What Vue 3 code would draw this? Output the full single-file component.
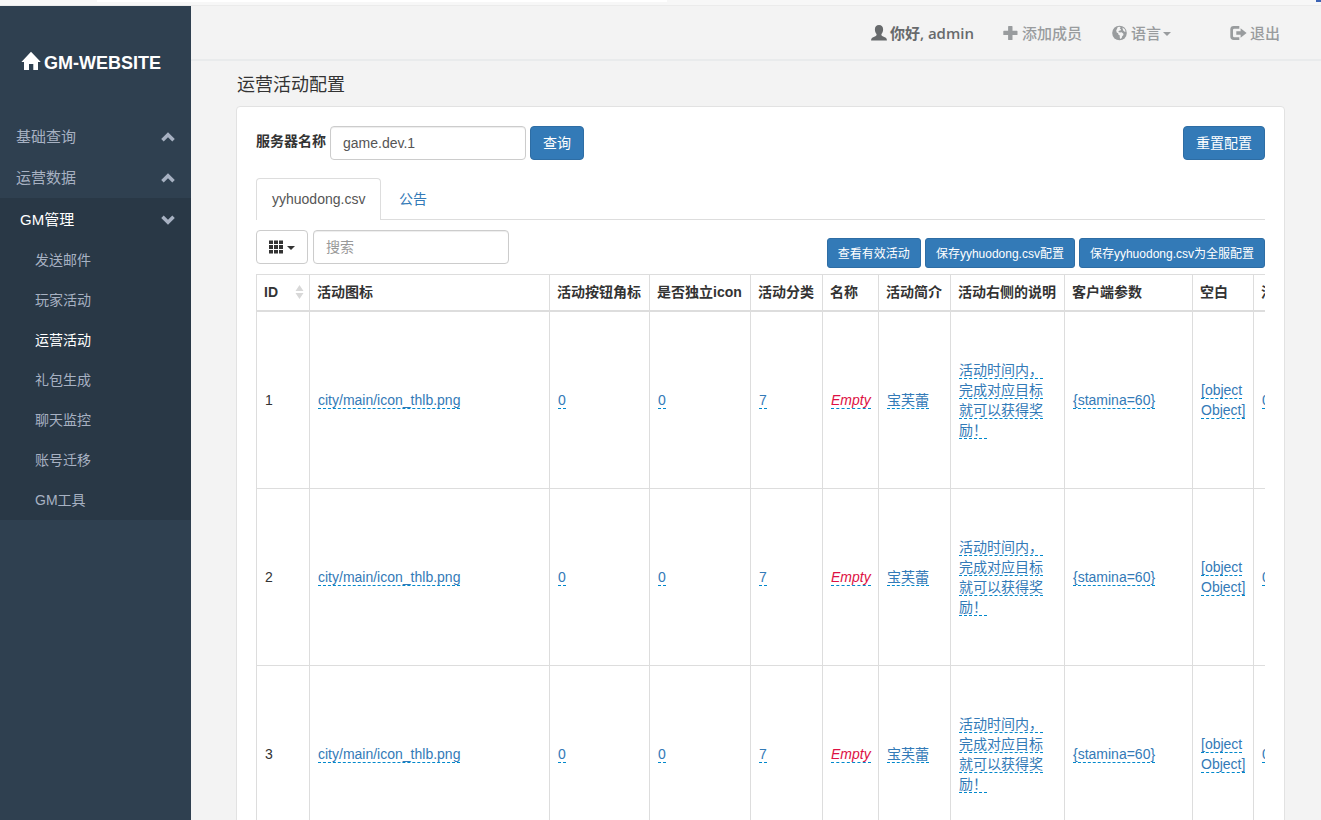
<template>
  <div class="page">
    <div class="browser-bar">
      <div class="address"></div>
      <div class="mark"></div>
    </div>
    <div class="layout">
      <aside class="sidebar">
        <div class="logo">
          <svg width="20" height="20" viewBox="0 0 20 20"><path d="M10 .8 19.8 11H17v8h-4.700v-6H8v6H3v-8H.4z" /></svg>
          <span>GM-WEBSITE</span>
        </div>
        <div v-for="menu in menus" :key="menu.name" class="menu" :class="{ open: menu.children }">
          <div class="menu-title">
            <span>{{ menu.name }}</span>
            <svg class="chevron" width="14" height="10" viewBox="0 0 14 10"><path d="M7 .3 13.800 7 11.300 9.500 7 5.200 2.700 9.500 .2 7z" /></svg>
          </div>
          <ul v-if="menu.children">
            <li v-for="item in menu.children" :key="item" :class="{ active: item === current }">{{ item }}</li>
          </ul>
        </div>
      </aside>
      <main class="main">
        <header class="navbar">
          <div class="nav-item user">
            <svg width="16" height="16" viewBox="0 0 16 16"><path d="M8 .1C10.600 .1 12.100 1.700 12.100 4.400C12.100 6.500 11.200 8 10.500 9C10.200 10.100 10.500 10.700 11.600 11.200L14.300 12.400C15.500 12.900 15.900 13.900 15.900 15.400H.1C.1 13.900 .5 12.900 1.700 12.400L4.400 11.200C5.500 10.700 5.800 10.100 5.500 9C4.800 8 3.900 6.500 3.900 4.400C3.900 1.700 5.400 .1 8 .1z" /></svg>
            <span>你好, admin</span>
          </div>
          <div class="nav-item add">
            <svg width="15" height="16" viewBox="0 0 15 16"><path d="M5.700 1h3.200q.6 0 .6.6v4.200h4.400q.6 0 .6.600v3q0 .6-.6.6H9.500v4.400q0 .6-.6.6H5.700q-.6 0-.6-.6V10H.9q-.6 0-.6-.6v-3q0-.6.6-.6h4.200V1.600q0-.6.6-.6z" /></svg>
            <span>添加成员</span>
          </div>
          <div class="nav-item lang">
            <svg width="15" height="16" viewBox="0 0 15 16">
              <circle cx="7.500" cy="8" r="7.300" />
              <path class="land" d="M5.800 2 7.600 1.800 8.700 2.700 7.700 3.700 9.100 4.300 8.500 5.500 7 5.700 6.300 7 8 7.400 9.600 7.300 11.200 8.500 11.500 10 10.200 11.200 9.700 13 8.300 14 7.700 12.300 7.800 10.600 6.300 9.500 6.200 8.300 4.700 7.500 4.200 5.500 4.900 4zM10.300 2.400 12.600 4.100 13.700 6.600 12.600 6.800 11.200 5.600 10.800 4.200z" />
            </svg>
            <span>语言</span><i class="caret"></i>
          </div>
          <div class="nav-item logout">
            <svg width="17" height="16" viewBox="0 0 17 16"><path d="M9.300 1H3.700Q.3 1 .3 4.400v7.200Q.3 15 3.700 15h5.600v-2.700H4.200q-1.200 0-1.200-1.200V4.900q0-1.200 1.200-1.200h5.100zM10.600 3.300 16.600 8l-6 4.700V9.800H6.300V6.200h4.300z" /></svg>
            <span>退出</span>
          </div>
        </header>
        <h2>运营活动配置</h2>
        <section class="card">
          <div class="query">
            <label>服务器名称</label>
            <input v-model="server" type="text" class="control" />
            <button class="btn">查询</button>
            <button class="btn reset">重置配置</button>
          </div>
          <div class="tabs">
            <div class="tab active">yyhuodong.csv</div>
            <div class="tab">公告</div>
          </div>
          <div class="toolbar">
            <button class="columns-btn">
              <svg width="14" height="14" viewBox="0 0 14 14"><path d="M0 .5h4v3.500H0zM5 .5h4v3.500H5zM10 .5h4v3.500h-4zM0 5h4v4H0zM5 5h4v4H5zM10 5h4v4h-4zM0 10h4v3.500H0zM5 10h4v3.500H5zM10 10h4v3.500h-4z" /></svg>
              <i class="caret"></i>
            </button>
            <input v-model="keyword" type="text" class="control" placeholder="搜索" />
            <div class="actions">
              <button class="btn small">查看有效活动</button>
              <button class="btn small">保存yyhuodong.csv配置</button>
              <button class="btn small">保存yyhuodong.csv为全服配置</button>
            </div>
          </div>
          <div class="table-wrap">
            <table>
              <colgroup>
                <col v-for="col in columns" :key="col.title" :style="{ width: col.width + 'px' }" />
              </colgroup>
              <thead>
                <tr>
                  <th v-for="col in columns" :key="col.title">
                    <div class="th-inner">
                      <span>{{ col.title }}</span>
                      <svg v-if="col.sortable" width="9" height="14" viewBox="0 0 9 14"><path d="M4.500 0 8.500 6h-8zM4.500 14 .5 8h8z" /></svg>
                    </div>
                  </th>
                </tr>
              </thead>
              <tbody>
                <tr v-for="id in 3" :key="id">
                  <td>{{ id }}</td>
                  <td v-for="(value, i) in rowValues" :key="i">
                    <a :class="{ empty: !value }">{{ value || 'Empty' }}</a>
                  </td>
                </tr>
              </tbody>
            </table>
          </div>
        </section>
      </main>
    </div>
  </div>
</template>

<script setup>
import { ref } from 'vue';

const server = ref('game.dev.1');
const keyword = ref('');
const current = ref('运营活动');

const menus = [
  { name: '基础查询' },
  { name: '运营数据' },
  {
    name: 'GM管理',
    children: ['发送邮件', '玩家活动', '运营活动', '礼包生成', '聊天监控', '账号迁移', 'GM工具'],
  },
];

const columns = [
  { title: 'ID', width: 53, sortable: true },
  { title: '活动图标', width: 240 },
  { title: '活动按钮角标', width: 100 },
  { title: '是否独立icon', width: 101 },
  { title: '活动分类', width: 72 },
  { title: '名称', width: 56 },
  { title: '活动简介', width: 72 },
  { title: '活动右侧的说明', width: 114 },
  { title: '客户端参数', width: 128 },
  { title: '空白', width: 61 },
  { title: '活动', width: 72 },
];

// 除 ID 外每行的单元格内容，空字符串显示 Empty
const rowValues = [
  'city/main/icon_thlb.png',
  '0',
  '0',
  '7',
  '',
  '宝芙蕾',
  '活动时间内，完成对应目标就可以获得奖励！',
  '{stamina=60}',
  '[object Object]',
  '0',
];
</script>

<style>
body {
  overflow: hidden;
}
</style>

<style scoped>
* {
  box-sizing: border-box;
}
.page {
  display: flex;
  flex-direction: column;
  height: 100vh;
  overflow: hidden;
  background: #f3f3f3;
  color: #333;
  font-family: "Liberation Sans", "Noto Sans CJK SC", sans-serif;
  font-size: 14px;
  line-height: 20px;
}
svg {
  display: block;
  flex: none;
  fill: currentColor;
}
.browser-bar {
  display: flex;
  justify-content: space-between;
  flex: none;
  height: 6px;
  background: #f7f7f7;
  border-bottom: 1px solid #ebebeb;
}
.address {
  width: 570px;
  height: 2px;
  margin-left: 97px;
  background: #fff;
}
.mark {
  width: 5px;
  height: 2px;
  background: #3c63b4;
}
.layout {
  display: flex;
  flex: 1;
  min-height: 0;
}
.sidebar {
  flex: none;
  width: 191px;
  background: #2f4050;
  color: #a7b1c2;
}
.logo {
  display: flex;
  align-items: center;
  gap: 3px;
  height: 110px;
  padding: 4px 0 0 21px;
  color: #fff;
  font-size: 18px;
  font-weight: bold;
}
.logo svg {
  margin-top: -5px;
}
.menu-title {
  display: flex;
  align-items: center;
  justify-content: space-between;
  height: 41px;
  padding: 0 16px;
  font-size: 15px;
}
.menu.open {
  background: #293846;
}
.menu.open .menu-title {
  height: 42px;
  padding-top: 1px;
  padding-left: 20px;
}
.menu.open .menu-title span {
  color: #fff;
}
.chevron {
  color: #a7b1c2;
}
.menu.open .chevron {
  transform: rotate(180deg);
}
ul {
  margin: 0;
  padding: 0;
  list-style: none;
}
li {
  height: 40px;
  padding-left: 35px;
  line-height: 40px;
}
li.active {
  color: #fff;
}
.main {
  flex: 1;
  min-width: 0;
}
.navbar {
  display: flex;
  align-items: center;
  justify-content: flex-end;
  height: 55px;
  padding-right: 41px;
  border-bottom: 2px solid #e9ebec;
  color: #999c9e;
  font-family: "Open Sans", "Noto Sans CJK SC", sans-serif;
  font-size: 15px;
  font-weight: 500;
}
.nav-item {
  display: flex;
  align-items: center;
  gap: 4px;
}
.user {
  gap: 3px;
  margin-right: 29px;
  color: #676a6c;
  font-weight: 600;
}
.add {
  margin-right: 30px;
}
.lang {
  margin-right: 59px;
}
.logout {
  gap: 3px;
}
.land {
  fill: #f3f3f3;
}
.caret {
  border-top: 4px solid;
  border-left: 4px solid transparent;
  border-right: 4px solid transparent;
}
.lang .caret {
  margin: 2px 0 0 -2px;
}
h2 {
  margin: 0;
  padding: 12px 0 8px 46px;
  font-size: 18px;
  font-weight: normal;
  line-height: 25px;
}
.card {
  width: 1049px;
  height: 760px;
  margin-left: 45px;
  padding: 19px;
  background: #fff;
  border: 1px solid #e2e2e2;
  border-radius: 4px;
}
.query {
  display: flex;
  gap: 4px;
}
label {
  width: 70px;
  padding-top: 5px;
  font-weight: bold;
  white-space: nowrap;
}
.control {
  width: 196px;
  height: 34px;
  padding: 6px 12px;
  border: 1px solid #ccc;
  border-radius: 4px;
  box-shadow: inset 0 1px 1px rgba(0, 0, 0, 0.075);
  color: #555;
  font-family: inherit;
  font-size: 14px;
}
.control::placeholder {
  color: #999;
}
.btn {
  height: 34px;
  padding: 0 12px 2px;
  background: #337ab7;
  border: 1px solid #2e6da4;
  border-radius: 4px;
  color: #fff;
  font-family: inherit;
  font-size: 14px;
  white-space: nowrap;
}
.reset {
  margin-left: auto;
}
.tabs {
  display: flex;
  height: 42px;
  margin-top: 18px;
  border-bottom: 1px solid #ddd;
}
.tab {
  height: 42px;
  padding: 11px 16px;
  color: #337ab7;
}
.tab.active {
  width: 125px;
  margin-right: 2px;
  padding: 10px 15px;
  background: #fff;
  border: 1px solid #ddd;
  border-bottom: none;
  border-radius: 4px 4px 0 0;
  color: #555;
}
.toolbar {
  display: flex;
  gap: 5px;
  height: 54px;
  padding-top: 10px;
}
.columns-btn {
  display: flex;
  align-items: center;
  gap: 4px;
  width: 52px;
  height: 34px;
  padding: 0 12px;
  background: #fff;
  border: 1px solid #ccc;
  border-radius: 4px;
  color: #333;
}
.columns-btn .caret {
  margin-top: 1px;
}
.actions {
  display: flex;
  gap: 4px;
  margin-left: auto;
  padding-top: 8px;
}
.btn.small {
  height: 30px;
  padding: 0 10px 2px;
  border-radius: 3px;
  font-size: 12px;
}
.table-wrap {
  overflow: hidden;
}
table {
  width: 1070px;
  table-layout: fixed;
  border-collapse: separate;
  border-spacing: 0;
  border-top: 1px solid #ddd;
  border-left: 1px solid #ddd;
}
th {
  height: 37px;
  padding: 0 0 2px 7px;
  border-right: 1px solid #ddd;
  border-bottom: 2px solid #ddd;
  text-align: left;
  white-space: nowrap;
}
.th-inner {
  display: flex;
  align-items: center;
  justify-content: space-between;
  padding-right: 5px;
}
.th-inner svg {
  color: #d8d8d8;
}
td {
  height: 177px;
  padding: 0 0 0 8px;
  border-right: 1px solid #ddd;
  border-bottom: 1px solid #ddd;
  vertical-align: middle;
}
td:nth-child(8) {
  padding-right: 20px;
}
a {
  color: #337ab7;
  border-bottom: 1px dashed #08c;
}
a.empty {
  color: #d14;
  font-style: italic;
}
</style>
